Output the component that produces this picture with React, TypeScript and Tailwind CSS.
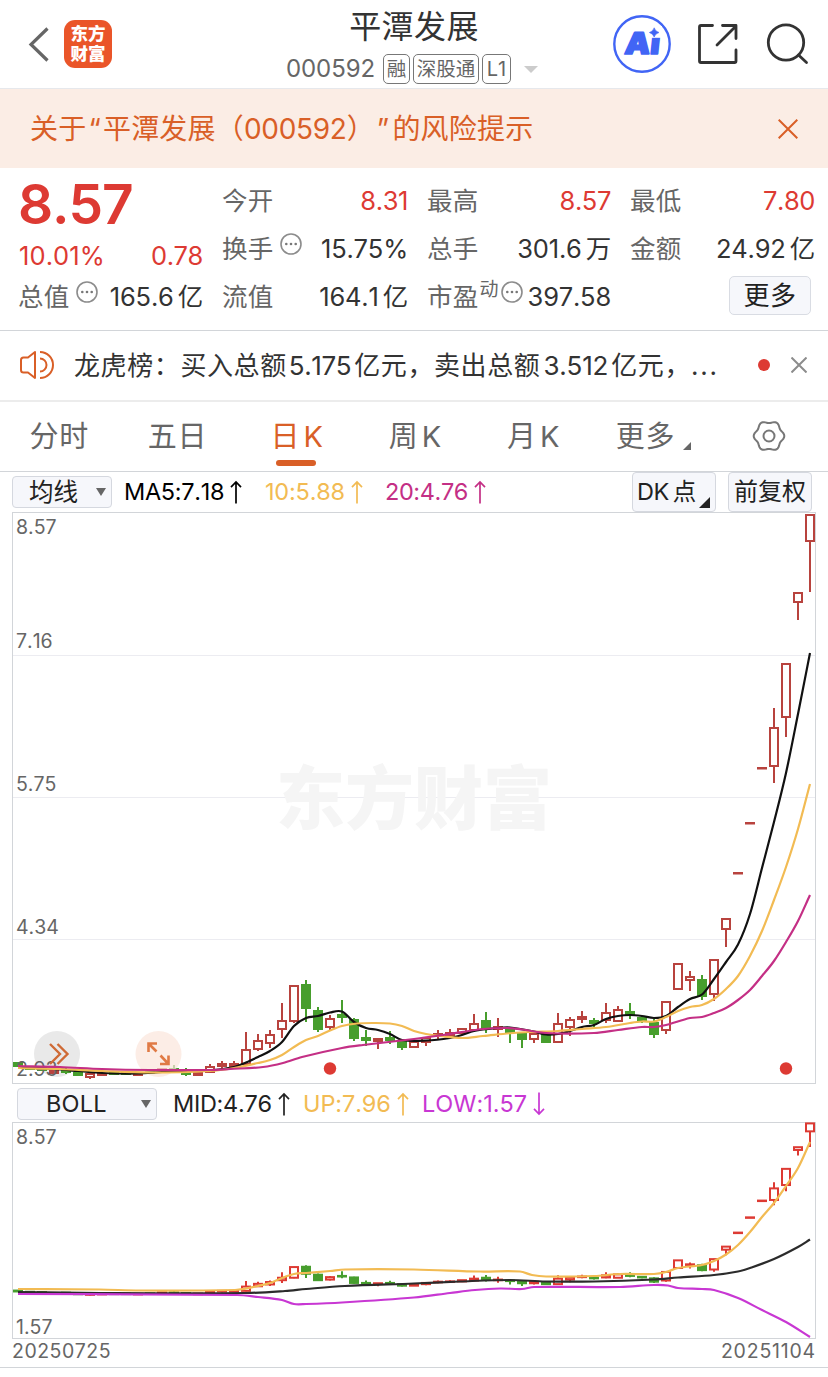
import type { ReactNode } from "react";

type Candle = {
  up: boolean;
  high: number;
  top: number;
  bottom: number;
  low: number;
};

type Point = [number, number];

const r = (high: number, top: number, bottom: number, low: number): Candle => ({ up: true, high, top, bottom, low });
const g = (high: number, top: number, bottom: number, low: number): Candle => ({ up: false, high, top, bottom, low });

const candles: Candle[] = [
  g(1062, 1063, 1066, 1067), g(1066, 1067, 1069, 1070), g(1067, 1068, 1070, 1071), r(1070, 1071, 1073, 1074),
  g(1068, 1070, 1072, 1074), g(1071, 1073, 1075, 1075), r(1073, 1074, 1077, 1079), r(1073, 1074, 1075, 1076),
  g(1073, 1073, 1074, 1074), g(1072, 1073, 1074, 1074), r(1073, 1074, 1075, 1075), g(1071, 1072, 1073, 1073),
  r(1068, 1069, 1070, 1071), g(1065, 1069, 1070, 1072), g(1068, 1071, 1074, 1076), r(1072, 1073, 1075, 1075),
  r(1064, 1067, 1072, 1072), r(1061, 1064, 1066, 1069), r(1061, 1064, 1066, 1067), r(1032, 1050, 1064, 1066),
  r(1034, 1041, 1049, 1051), r(1030, 1035, 1043, 1048), r(1003, 1021, 1029, 1038), r(985, 986, 1021, 1023),
  g(980, 985, 1008, 1022), g(1007, 1011, 1029, 1032), r(1015, 1019, 1027, 1030), g(1000, 1015, 1017, 1023),
  g(1018, 1020, 1038, 1041), g(1030, 1038, 1040, 1046), r(1038, 1039, 1041, 1049), g(1031, 1038, 1040, 1044),
  g(1041, 1042, 1047, 1050), r(1042, 1042, 1047, 1048), r(1037, 1038, 1042, 1046), r(1030, 1034, 1036, 1039),
  r(1029, 1033, 1035, 1038), r(1029, 1029, 1033, 1034), r(1014, 1024, 1030, 1032), g(1012, 1021, 1028, 1033),
  r(1018, 1027, 1029, 1037), g(1028, 1030, 1032, 1043), g(1033, 1034, 1039, 1048), r(1033, 1034, 1039, 1043),
  g(1033, 1035, 1042, 1043), r(1013, 1024, 1042, 1043), r(1017, 1020, 1027, 1036), r(1011, 1017, 1019, 1023),
  g(1018, 1021, 1023, 1027), r(1003, 1013, 1020, 1023), r(1006, 1010, 1021, 1022), g(1003, 1012, 1015, 1019),
  g(1016, 1018, 1020, 1023), g(1019, 1023, 1034, 1038), r(1001, 1002, 1030, 1034), r(964, 964, 989, 990),
  r(971, 977, 980, 991), g(975, 980, 996, 1000), r(959, 960, 994, 1001), r(918, 919, 929, 947),
  r(873, 873, 873.5, 874), r(823, 823, 823.5, 824), r(768, 768, 768.5, 769), r(708, 728, 766, 783),
  r(664, 664, 717, 737), r(593, 593, 602, 620), r(515, 515, 541, 592),
];

const ma5: Point[] = [
  [18, 1067], [54, 1069], [78, 1071], [102, 1073], [138, 1073.5], [162, 1072], [186, 1071], [210, 1070.5],
  [234, 1067], [246, 1062.5], [258, 1057], [270, 1051], [282, 1042], [294, 1026], [306, 1018], [318, 1016],
  [330, 1012.5], [342, 1011.5], [354, 1022], [366, 1028], [378, 1030], [390, 1034], [402, 1040], [426, 1040.5],
  [450, 1038], [462, 1035], [474, 1031], [498, 1028], [510, 1027.5], [534, 1031.5], [546, 1034.5], [558, 1034],
  [570, 1031], [582, 1027], [594, 1025], [606, 1019], [618, 1016], [630, 1015], [642, 1016], [654, 1018],
  [666, 1016], [678, 1007], [690, 999], [702, 994.5], [714, 979], [726, 962], [738, 944.5], [750, 914],
  [762, 868], [774, 822], [786, 773], [798, 714], [810, 653],
];

const ma10: Point[] = [
  [18, 1068], [60, 1069], [102, 1071], [150, 1072.5], [210, 1071], [234, 1068], [258, 1063], [270, 1060],
  [282, 1055], [294, 1047], [306, 1040], [318, 1036], [330, 1030.5], [342, 1026], [357, 1023.5], [373, 1023],
  [390, 1023.5], [402, 1026], [414, 1031], [426, 1034], [440, 1036], [462, 1038], [483, 1036], [513, 1033],
  [530, 1032], [558, 1031], [582, 1029], [606, 1027], [630, 1023], [642, 1021.5], [654, 1021.5], [666, 1017],
  [678, 1011], [690, 1007], [702, 1005], [714, 999], [726, 989], [738, 976], [750, 956], [762, 931],
  [774, 900], [786, 867], [798, 829], [810, 784],
];

const ma20: Point[] = [
  [18, 1066], [60, 1067], [102, 1069], [150, 1070], [210, 1070], [230, 1069], [263, 1067], [283, 1063],
  [302, 1057], [342, 1048], [363, 1045], [414, 1039], [443, 1035], [483, 1029], [507, 1028], [522, 1029.5],
  [546, 1033], [594, 1033], [618, 1030], [642, 1027], [654, 1027], [666, 1025], [690, 1018], [702, 1017],
  [714, 1013], [726, 1008], [738, 1000], [750, 990], [762, 976], [774, 961], [786, 942], [798, 921], [810, 895],
];

const bollUp: Point[] = [
  [18, 1289], [100, 1289.5], [140, 1290.5], [235, 1290], [246, 1288.5], [258, 1286], [270, 1283], [282, 1278],
  [294, 1274], [306, 1273], [330, 1271], [345, 1269.5], [414, 1269.5], [480, 1271.5], [520, 1271.5], [532, 1275],
  [546, 1276.5], [594, 1276], [620, 1274], [654, 1274], [666, 1272], [678, 1268], [702, 1265], [714, 1261],
  [726, 1254.5], [738, 1245], [750, 1232], [762, 1217], [774, 1203], [786, 1186], [798, 1168], [810, 1142],
];

const bollMid: Point[] = [
  [18, 1292], [100, 1293], [246, 1293], [285, 1291], [306, 1289], [345, 1286], [414, 1283.5], [460, 1281.5],
  [510, 1280], [546, 1281.5], [594, 1281.5], [654, 1279.5], [678, 1277.5], [714, 1275], [738, 1271.5],
  [750, 1268], [774, 1259], [798, 1247], [810, 1239.5],
];

const bollLow: Point[] = [
  [18, 1294], [237, 1295], [258, 1297], [282, 1300], [294, 1304], [306, 1304], [342, 1302.5], [414, 1297.5],
  [450, 1293], [475, 1290], [500, 1288.5], [522, 1289], [534, 1287], [620, 1287], [654, 1285], [668, 1285.5],
  [678, 1288], [702, 1289], [714, 1290], [738, 1298], [762, 1310], [786, 1322], [810, 1337],
];

// smooth path with horizontal control points limited to each segment
function toPath(points: Point[]) {
  const slope = (i: number) => {
    const a = points[Math.max(i - 1, 0)];
    const b = points[Math.min(i + 1, points.length - 1)];
    return (b[1] - a[1]) / (b[0] - a[0]);
  };
  return points
    .map(([x, y], i) => {
      if (i === 0) return `M${x} ${y}`;
      const [px, py] = points[i - 1];
      const d = (x - px) / 3;
      return `C${px + d} ${py + slope(i - 1) * d} ${x - d} ${y - slope(i) * d} ${x} ${y}`;
    })
    .join("");
}

// the BOLL pane covers a wider price range, so the same prices get squeezed
const toBoll = (y: number) => 1122.5 + (y - 512) * 0.305;

const gearPoints = Array.from({ length: 72 }, (_, i) => {
  const a = (i * Math.PI) / 36;
  const radius = 14.1 + 1.2 * Math.cos(6 * a);
  return `${(17 + radius * Math.cos(a)).toFixed(2)},${(16 + radius * Math.sin(a)).toFixed(2)}`;
}).join(" ");

function Line({ points, color }: { points: Point[]; color: string }) {
  return <path d={toPath(points)} fill="none" stroke={color} strokeWidth={2.2} strokeLinejoin="round" />;
}

function Candles({ red, scale = (y) => y }: { red: string; scale?: (y: number) => number }) {
  return (
    <g>
      {candles.map((c, i) => {
        const x = 18 + i * 12;
        const top = scale(c.top);
        const bottom = scale(c.bottom);
        const color = c.up ? red : "#479e2d";
        return (
          <g key={x} stroke={color} strokeWidth={2}>
            <path d={`M${x} ${scale(c.high)}V${top}M${x} ${bottom}V${scale(c.low)}`} />
            <rect
              x={x - 4}
              y={top}
              width={8}
              height={Math.max(bottom - top, 0.5)}
              fill={c.up ? "#fff" : color}
            />
          </g>
        );
      })}
    </g>
  );
}

function More() {
  return (
    <svg className="mb-2.5 h-[22px] w-[22px] shrink-0" viewBox="0 0 22 22" fill="none">
      <circle cx="11" cy="11" r="10" stroke="#8c8c8c" strokeWidth="1.6" />
      <g fill="#777">
        <circle cx="6.3" cy="11" r="1.3" />
        <circle cx="11" cy="11" r="1.3" />
        <circle cx="15.7" cy="11" r="1.3" />
      </g>
    </svg>
  );
}

function Stat({ label, value, red, extra }: { label: string; value: ReactNode; red?: boolean; extra?: ReactNode }) {
  return (
    <div className="flex h-12 items-center whitespace-nowrap">
      <span className="text-[25.5px] tracking-[0.3px] text-[#666]">{label}</span>
      {extra}
      <span className={red ? "ml-auto tracking-[-0.4px] text-[#dd3a33]" : "ml-auto tracking-[-0.2px] text-[#333]"}>
        {value}
      </span>
    </div>
  );
}

function Unit({ children }: { children: ReactNode }) {
  return <span className="ml-1">{children}</span>;
}

function Arrow({ down }: { down?: boolean }) {
  return (
    <svg
      className={down ? "h-6 w-3 rotate-180" : "h-6 w-3"}
      viewBox="0 0 12 24"
      fill="none"
      stroke="currentColor"
      strokeWidth="1.7"
    >
      <path d="M6 23.5V2M1 7.2L6 2L11 7.2" />
    </svg>
  );
}

function Header() {
  return (
    <header className="flex h-[89px] border-b border-[#e6e8ec]">
      <div className="flex w-[278px] pl-7 pt-5">
        <svg className="mt-[7px] h-9 w-[21px]" viewBox="0 0 21 36" fill="none" stroke="#666" strokeWidth="3.2">
          <path d="M19.5 1.5L3 17.5L19.5 33.5" />
        </svg>
        <div className="ml-[15px] flex h-12 w-12 flex-col items-center justify-center rounded-[11px] bg-[#ea5529] text-[17.5px] font-black leading-5 text-white">
          <span>东方</span>
          <span>财富</span>
        </div>
      </div>
      <div className="flex w-[272px] flex-col items-center">
        <h1 className="mt-[7px] text-[32px] leading-10 tracking-[0.4px] text-[#333]">平潭发展</h1>
        <div className="mt-[7px] flex -translate-x-0.5 items-center gap-[3px] leading-[30px] text-[#666]">
          <span className="mr-[5px] text-2xl leading-[30px] tracking-[-0.1px]">000592</span>
          <span className="flex h-[30px] w-[27px] items-center justify-center rounded-[5px] border border-[#777] text-[19.5px]">
            融
          </span>
          <span className="flex h-[30px] w-[66px] items-center justify-center rounded-[5px] border border-[#777] text-[19.5px]">
            深股通
          </span>
          <span className="flex h-[30px] w-[29px] items-center justify-center rounded-[5px] border border-[#777] text-[20px]">
            L1
          </span>
          <svg className="ml-2.5 h-[7px] w-3.5" viewBox="0 0 14 7" fill="#ccc">
            <path d="M0 0H14L7 7Z" />
          </svg>
        </div>
      </div>
      <div className="ml-[62px] flex pt-[15px]">
        <svg className="h-[60px] w-[60px]" viewBox="0 0 60 60">
          <circle cx="30" cy="29" r="27.700" fill="none" stroke="#4165f5" strokeWidth="2.400" />
          <text
            transform="translate(12 39.300) skewX(-6)"
            fill="#4165f5"
            stroke="#4165f5"
            strokeWidth="1.600"
            strokeLinejoin="round"
            fontSize="30"
            fontWeight="900"
            textLength="35"
            lengthAdjust="spacingAndGlyphs"
          >
            Ai
          </text>
          <path d="M34 11H50V22.800H34Z" fill="#fff" />
          <path
            d="M42.200 12.800Q43.200 16.500 47 17.500Q43.200 18.600 42.200 22Q41 18.600 37.400 17.500Q41 16.500 42.200 12.800Z"
            fill="#4165f5"
            stroke="#4165f5"
            strokeWidth="0.600"
          />
        </svg>
        <svg
          className="ml-[25px] mt-2 h-11 w-11"
          viewBox="0 0 44 44"
          fill="none"
          stroke="#333"
          strokeWidth="2.800"
          strokeLinecap="round"
          strokeLinejoin="round"
        >
          <path d="M15.500 2.500H4Q2.500 2.500 2.500 4V38Q2.500 39.500 4 39.500H37.500Q39 39.500 39 38V27M20 22L38 4M25.500 2.500H39V15.500" />
        </svg>
        <svg
          className="ml-6 mt-2 h-11 w-11"
          viewBox="0 0 44 44"
          fill="none"
          stroke="#333"
          strokeWidth="2.800"
          strokeLinecap="round"
        >
          <circle cx="21" cy="19.500" r="17.700" />
          <path d="M33.500 32L41.500 39.500" />
        </svg>
      </div>
    </header>
  );
}

function Notice() {
  return (
    <div className="flex h-[79px] items-center justify-between bg-[#fbede5] pl-[30px] pr-[30px] text-[#d95f27]">
      <p className="whitespace-nowrap text-[28px] tracking-[0.2px]">
        关于<span className="ml-0.5 mr-0.5">“</span>平潭发展（
        <span className="tracking-[-0.3px]">000592</span>）<span className="ml-0.5 mr-[3px]">”</span>的风险提示
      </p>
      <svg className="h-5 w-5" viewBox="0 0 20 20" fill="none" stroke="currentColor" strokeWidth="2">
        <path d="M0.7 0.7L19.3 19.3M19.3 0.7L0.7 19.3" />
      </svg>
    </div>
  );
}

function Quote() {
  return (
    <section className="grid h-[163px] grid-cols-[184px_186px_184px_185px] gap-x-[19px] border-b border-[#d2d5d9] pl-[19px] pt-[9px] text-[25.5px] leading-8">
      <div className="flex flex-col">
        <div className="-ml-px flex h-[54px] items-center text-[55px] font-semibold leading-none tracking-[-1.1px] text-[#dd3a33]">
          8.57
        </div>
        <div className="flex h-[50px] items-center justify-between text-[#dd3a33]">
          <span className="tracking-[0.1px]">10.01%</span>
          <span className="tracking-[-0.4px]">0.78</span>
        </div>
        <div className="-ml-px -mt-2">
          <Stat
            label="总值"
            extra={<span className="ml-1.5"><More /></span>}
            value={<>165.6<Unit>亿</Unit></>}
          />
        </div>
      </div>
      <div>
        <Stat label="今开" value="8.31" red />
        <Stat label="换手" extra={<span className="ml-1.5"><More /></span>} value="15.75%" />
        <Stat label="流值" value={<>164.1<Unit>亿</Unit></>} />
      </div>
      <div>
        <Stat label="最高" value="8.57" red />
        <Stat label="总手" value={<>301.6<Unit>万</Unit></>} />
        <Stat
          label="市盈"
          extra={
            <span className="flex items-center">
              <span className="mb-[15px] ml-px text-[19px] text-[#666]">动</span>
              <span className="ml-0.5"><More /></span>
            </span>
          }
          value="397.58"
        />
      </div>
      <div>
        <Stat label="最低" value="7.80" red />
        <Stat label="金额" value={<>24.92<Unit>亿</Unit></>} />
        <div className="flex justify-end pr-1 pt-[3px]">
          <button className="flex h-[39px] w-[82px] items-center justify-center rounded-[5px] border border-[#d9dce3] bg-[#f6f7fb] text-[26px] tracking-[0.6px] text-[#222]">
            更多
          </button>
        </div>
      </div>
    </section>
  );
}

function News() {
  return (
    <div className="flex h-[71px] items-center border-b-2 border-[#ececec] pl-5 text-[26px] text-[#333]">
      <svg className="-mt-px h-[30px] w-[34px]" viewBox="0 0 34 30" fill="none" stroke="#d95f27" strokeWidth="2">
        <path d="M15 2L8 7.5H3.5Q1 7.5 1 10V20Q1 22.5 3.5 22.5H8L15 28Z" strokeLinejoin="round" />
        <path d="M20 2A13 13 0 0 1 20 28M20 8.5A6.500 6.500 0 0 1 20 21.500" />
      </svg>
      <p className="ml-5 w-[650px] whitespace-nowrap tracking-[0.6px]">
        龙虎榜：买入总额<span className="ml-0.5 mr-[3px] tracking-[-0.4px]">5.175</span>亿元，卖出总额
        <span className="ml-[3px] mr-[3px] tracking-[-0.2px]">3.512</span>亿元，
        <span className="tracking-[1.8px]">...</span>
      </p>
      <span className="-mt-0.5 ml-[34px] h-3 w-3 rounded-full bg-[#dd3a33]" />
      <svg className="-mt-0.5 ml-[21px] h-4 w-4" viewBox="0 0 16 16" fill="none" stroke="#8c8c8c" strokeWidth="2">
        <path d="M0.5 0.5L15.5 15.5M15.5 0.5L0.5 15.5" />
      </svg>
    </div>
  );
}

function Tabs() {
  return (
    <nav className="grid h-[70px] grid-cols-7 border-b border-[#d2d5d9] text-[29px] text-[#666]">
      {["分时", "五日", "日K", "周K", "月K"].map((tab) => (
        <div
          key={tab}
          className={
            tab === "日K"
              ? "relative flex items-center justify-center text-[#d95f27]"
              : "flex items-center justify-center"
          }
        >
          {tab.endsWith("K") ? (
            <span className="flex gap-1 pl-0.5">
              <span>{tab[0]}</span>
              <span>K</span>
            </span>
          ) : (
            <span className="tracking-[0.6px]">{tab}</span>
          )}
          {tab === "日K" && <span className="absolute bottom-[5px] h-1.5 w-10 rounded-full bg-[#d95f27]" />}
        </div>
      ))}
      <div className="flex items-center justify-center pl-1.5">
        <span className="tracking-[0.8px]">更多</span>
        <svg className="ml-2 mt-[19px] h-2 w-2" viewBox="0 0 8 8" fill="#666">
          <path d="M8 0V8H0Z" />
        </svg>
      </div>
      <div className="flex items-center justify-center">
        <svg className="-mt-px h-8 w-[34px]" viewBox="0 0 34 32" fill="none" stroke="#777" strokeWidth="2" strokeLinejoin="round">
          <polygon points={gearPoints} />
          <circle cx="17" cy="16" r="5.500" />
        </svg>
      </div>
    </nav>
  );
}

function Caret() {
  return (
    <svg className="h-2 w-2.5" viewBox="0 0 10 8" fill="#666">
      <path d="M0 0H10L5 8Z" />
    </svg>
  );
}

function MainChart() {
  return (
    <section>
      <div className="flex h-10 items-center pl-3 pr-4 text-[23.5px]">
        <div className="flex h-8 w-[100px] items-center justify-between rounded border border-[#d5d8df] bg-[#f6f7fb] pl-4 pr-[5px] text-[24.5px] leading-8 text-[#222]">
          均线
          <Caret />
        </div>
        <div className="ml-3 flex w-[141px] items-center gap-1.5 tracking-[-0.3px] text-black">
          MA5:7.18
          <Arrow />
        </div>
        <div className="flex w-[120px] items-center gap-1.5 tracking-[-0.2px] text-[#f2bb53]">
          10:5.88
          <Arrow />
        </div>
        <div className="flex items-center gap-1.5 tracking-[-0.4px] text-[#c42f85]">
          20:4.76
          <Arrow />
        </div>
        <div className="ml-auto flex h-10 w-[84px] items-center rounded border border-[#d5d8df] bg-[#f6f7fb] pl-1 text-[#222]">
          <span className="tracking-[-0.5px]">DK</span>
          <span className="ml-1">点</span>
          <svg className="ml-[3px] mt-[20px] h-[11px] w-[11px]" viewBox="0 0 11 11" fill="#222">
            <path d="M11 0V11H0Z" />
          </svg>
        </div>
        <div className="ml-3 flex h-10 w-[84px] items-center justify-center rounded border border-[#d5d8df] bg-[#f6f7fb] text-[24px] text-[#222]">
          前复权
        </div>
      </div>
      <svg className="ml-3 block h-[572px] w-[804px]" viewBox="12 512 804 572">
        <path d="M12 655.500H815M12 797.500H815M12 939.500H815" stroke="#ececf1" />
        <text x="414" y="824" textAnchor="middle" fontSize="69" fontWeight="900" fill="#f5f5f5">
          东方财富
        </text>
        <rect x="12.500" y="512.500" width="803" height="571" fill="none" stroke="#d2d5d9" />
        <circle cx="57" cy="1054" r="23" fill="#e9e9e9" />
        <g fill="#666" fontSize="19.500">
          <text x="16" y="534">8.57</text>
          <text x="16" y="648">7.16</text>
          <text x="16" y="791">5.75</text>
          <text x="16" y="934">4.34</text>
        </g>
        <Candles red="#b8433e" />
        <text x="16" y="1076" fontSize="19.500" fill="#666">2.93</text>
        <circle cx="158.500" cy="1054" r="23" fill="#fbe6dc" fillOpacity="0.7" />
        <Line points={ma5} color="#111" />
        <Line points={ma10} color="#f2bb53" />
        <Line points={ma20} color="#c42f85" />
        <path d="M50 1044L60 1054L50 1064M57.500 1044L67.500 1054L57.500 1064" fill="none" stroke="#cf6a35" strokeWidth="2.400" />
        <path
          d="M156.500 1051.500L148.500 1043.500M148.500 1052V1043.500H157M160.500 1055.500L168.500 1064M160 1064H168.500V1055.500"
          fill="none"
          stroke="#e07a45"
          strokeWidth="2.600"
        />
        <circle cx="330" cy="1068.500" r="6.200" fill="#dd3a33" />
        <circle cx="786" cy="1068.500" r="6.200" fill="#dd3a33" />
      </svg>
    </section>
  );
}

function BollChart() {
  return (
    <section>
      <div className="flex h-[38px] items-center pl-[17px] pt-px text-[23.5px]">
        <div className="flex h-8 w-[140px] items-center justify-between rounded border border-[#d5d8df] bg-[#f6f7fb] pl-7 pr-[5px] text-[#222]">
          <span className="tracking-[0.2px]">BOLL</span>
          <Caret />
        </div>
        <div className="ml-4 flex w-[130px] items-center gap-1.5 tracking-[-0.3px] text-[#222]">
          MID:4.76
          <Arrow />
        </div>
        <div className="flex w-[119px] items-center gap-1.5 tracking-[-0.1px] text-[#f2bb53]">
          UP:7.96
          <Arrow />
        </div>
        <div className="flex items-center gap-1.5 text-[#c837d3]">
          LOW:1.57
          <Arrow down />
        </div>
      </div>
      <svg className="ml-3 block h-[217px] w-[804px]" viewBox="12 1122 804 217">
        <rect x="12.500" y="1122.500" width="803" height="216" fill="none" stroke="#d2d5d9" />
        <g fill="#666" fontSize="19.500">
          <text x="16" y="1143.500">8.57</text>
          <text x="16" y="1334">1.57</text>
        </g>
        <Candles red="#dd3a33" scale={toBoll} />
        <Line points={bollUp} color="#f2bb53" />
        <Line points={bollMid} color="#2b2b2b" />
        <Line points={bollLow} color="#c837d3" />
      </svg>
      <div className="flex h-[29px] items-center justify-between border-b border-[#d2d5d9] pb-1 pl-3 pr-3 text-[19.5px] leading-6 text-[#666]">
        <span className="tracking-[0.5px]">20250725</span>
        <span className="tracking-[0.8px]">20251104</span>
      </div>
    </section>
  );
}

export default function App() {
  return (
    <main className="h-[1377px] w-[828px] overflow-hidden bg-white font-['Inter','Noto_Sans_CJK_SC',sans-serif] [font-feature-settings:'calt'_0] [font-kerning:none] [text-spacing-trim:space-all]">
      <Header />
      <Notice />
      <Quote />
      <News />
      <Tabs />
      <MainChart />
      <BollChart />
    </main>
  );
}
